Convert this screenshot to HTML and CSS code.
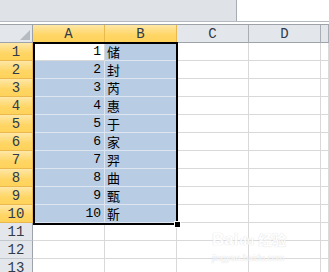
FILE: index.html
```html
<!DOCTYPE html>
<html lang="zh-CN">
<head>
  <meta charset="UTF-8">
  <title>Sheet1</title>
  <link rel="stylesheet" href="styles.css">
</head>
<body>
  <div class="topbar">
    <div class="namebox"></div>
    <div class="formula"></div>
  </div>
  <div class="gap"></div>

  <div class="sheet">
    <div class="grid" id="grid">
      <div class="hd corner"><span class="tri"></span></div>
      <div class="hd col on">A</div>
      <div class="hd col on">B</div>
      <div class="hd col">C</div>
      <div class="hd col">D</div>
      <div class="hd col"></div>
    </div>
    <div class="sel"></div>
    <div class="handle"></div>
    <div class="mark">
      <div class="logo">Bai<span class="du">du</span><span class="jy">经验</span></div>
      <div class="url">jingyan.baidu.com</div>
    </div>
  </div>

  <script>
    const chars = ['储', '封', '芮', '惠', '于', '家', '羿', '曲', '甄', '靳'];
    const grid = document.getElementById('grid');

    for (let r = 1; r <= 13; r++) {
      const inSel = r <= 10;
      let html = `<div class="hd row${inSel ? ' on' : ''}">${r}</div>`;
      html += `<div class="cell num${inSel ? (r === 1 ? ' active' : ' picked') : ''}">${inSel ? r : ''}</div>`;
      html += `<div class="cell cjk${inSel ? ' picked' : ''}">${inSel ? chars[r - 1] : ''}</div>`;
      html += '<div class="cell"></div><div class="cell"></div><div class="cell"></div>';
      grid.insertAdjacentHTML('beforeend', html);
    }
  </script>
</body>
</html>
```

FILE: styles.css
```css
body {
  margin: 0;
  width: 329px;
  height: 272px;
  overflow: hidden;
  background: #fff;
  font-family: "Liberation Mono", monospace;
}

.topbar {
  display: flex;
  height: 22px;
  border-bottom: 1px solid #b4b9bf;
  box-sizing: border-box;
}
.namebox {
  width: 236px;
  background: #dfe3e8;
  border-right: 1px solid #a7adb4;
}
.formula { flex: 1; background: #fff; }

.gap { height: 2px; background: #fff; }

.sheet {
  position: relative;
  border-top: 1px solid #9ea3aa;
}

.grid {
  display: grid;
  grid-template-columns: 33px 72px 72px 72px 72px 8px;
  grid-auto-rows: 18px;
}

.hd {
  box-sizing: border-box;
  background: #e3e7ec;
  color: #2f3a4a;
  font-family: "Liberation Mono", monospace;
  font-size: 14px;
  display: flex;
  align-items: center;
  justify-content: center;
  border-right: 1px solid #c3c8ce;
  border-bottom: 1px solid #c3c8ce;
}
.hd.col { border-right-color: #a9aeb5; border-bottom-color: #9ea3aa; }
.hd.row { border-right-color: #9ea3aa; }
.hd.on {
  background: linear-gradient(#fee7a6, #ffd564 60%, #ffd35a);
  border-color: #e9b94f;
}
.corner {
  position: relative;
  border-bottom-color: #9ea3aa;
  border-right-color: #9ea3aa;
}
.tri {
  position: absolute;
  right: 2px;
  bottom: 2px;
  width: 0;
  height: 0;
  border-left: 10px solid transparent;
  border-bottom: 10px solid #b6bbc2;
}

.cell {
  box-sizing: border-box;
  border-right: 1px solid #d9d9d9;
  border-bottom: 1px solid #d9d9d9;
  font-size: 13px;
  color: #000;
  line-height: 17px;
  white-space: nowrap;
}
.cell.picked { background: #b8cce4; border-color: #dde5f0; }
.cell.active { background: #fff; }
.num { text-align: right; padding-right: 3px; }
.cjk {
  padding-left: 2px;
  font-family: "Noto Sans CJK SC", sans-serif;
  font-size: 13px;
  line-height: 17px;
}

.sel {
  position: absolute;
  left: 33px;
  top: 17px;
  width: 145px;
  height: 183px;
  border: 2px solid #000;
  box-sizing: border-box;
}
.handle {
  position: absolute;
  left: 174px;
  top: 196px;
  width: 5px;
  height: 5px;
  background: #000;
  border: 1px solid #fff;
}

.mark {
  position: absolute;
  left: 212px;
  top: 205px;
  display: flex;
  flex-direction: column;
  gap: 2px;
  color: #fff;
  text-shadow: 0 0 1px #d6d6d6, 0 0 1px #d6d6d6;
  font-family: "Liberation Sans", "Noto Sans CJK SC", sans-serif;
  opacity: 0.75;
}
.logo {
  font-size: 17px;
  font-weight: bold;
  line-height: 20px;
  white-space: nowrap;
}
.du { font-size: 12px; margin-left: 1px; }
.jy { font-size: 14px; margin-left: 4px; }
.url {
  font-size: 9px;
  line-height: 11px;
  white-space: nowrap;
}
```
